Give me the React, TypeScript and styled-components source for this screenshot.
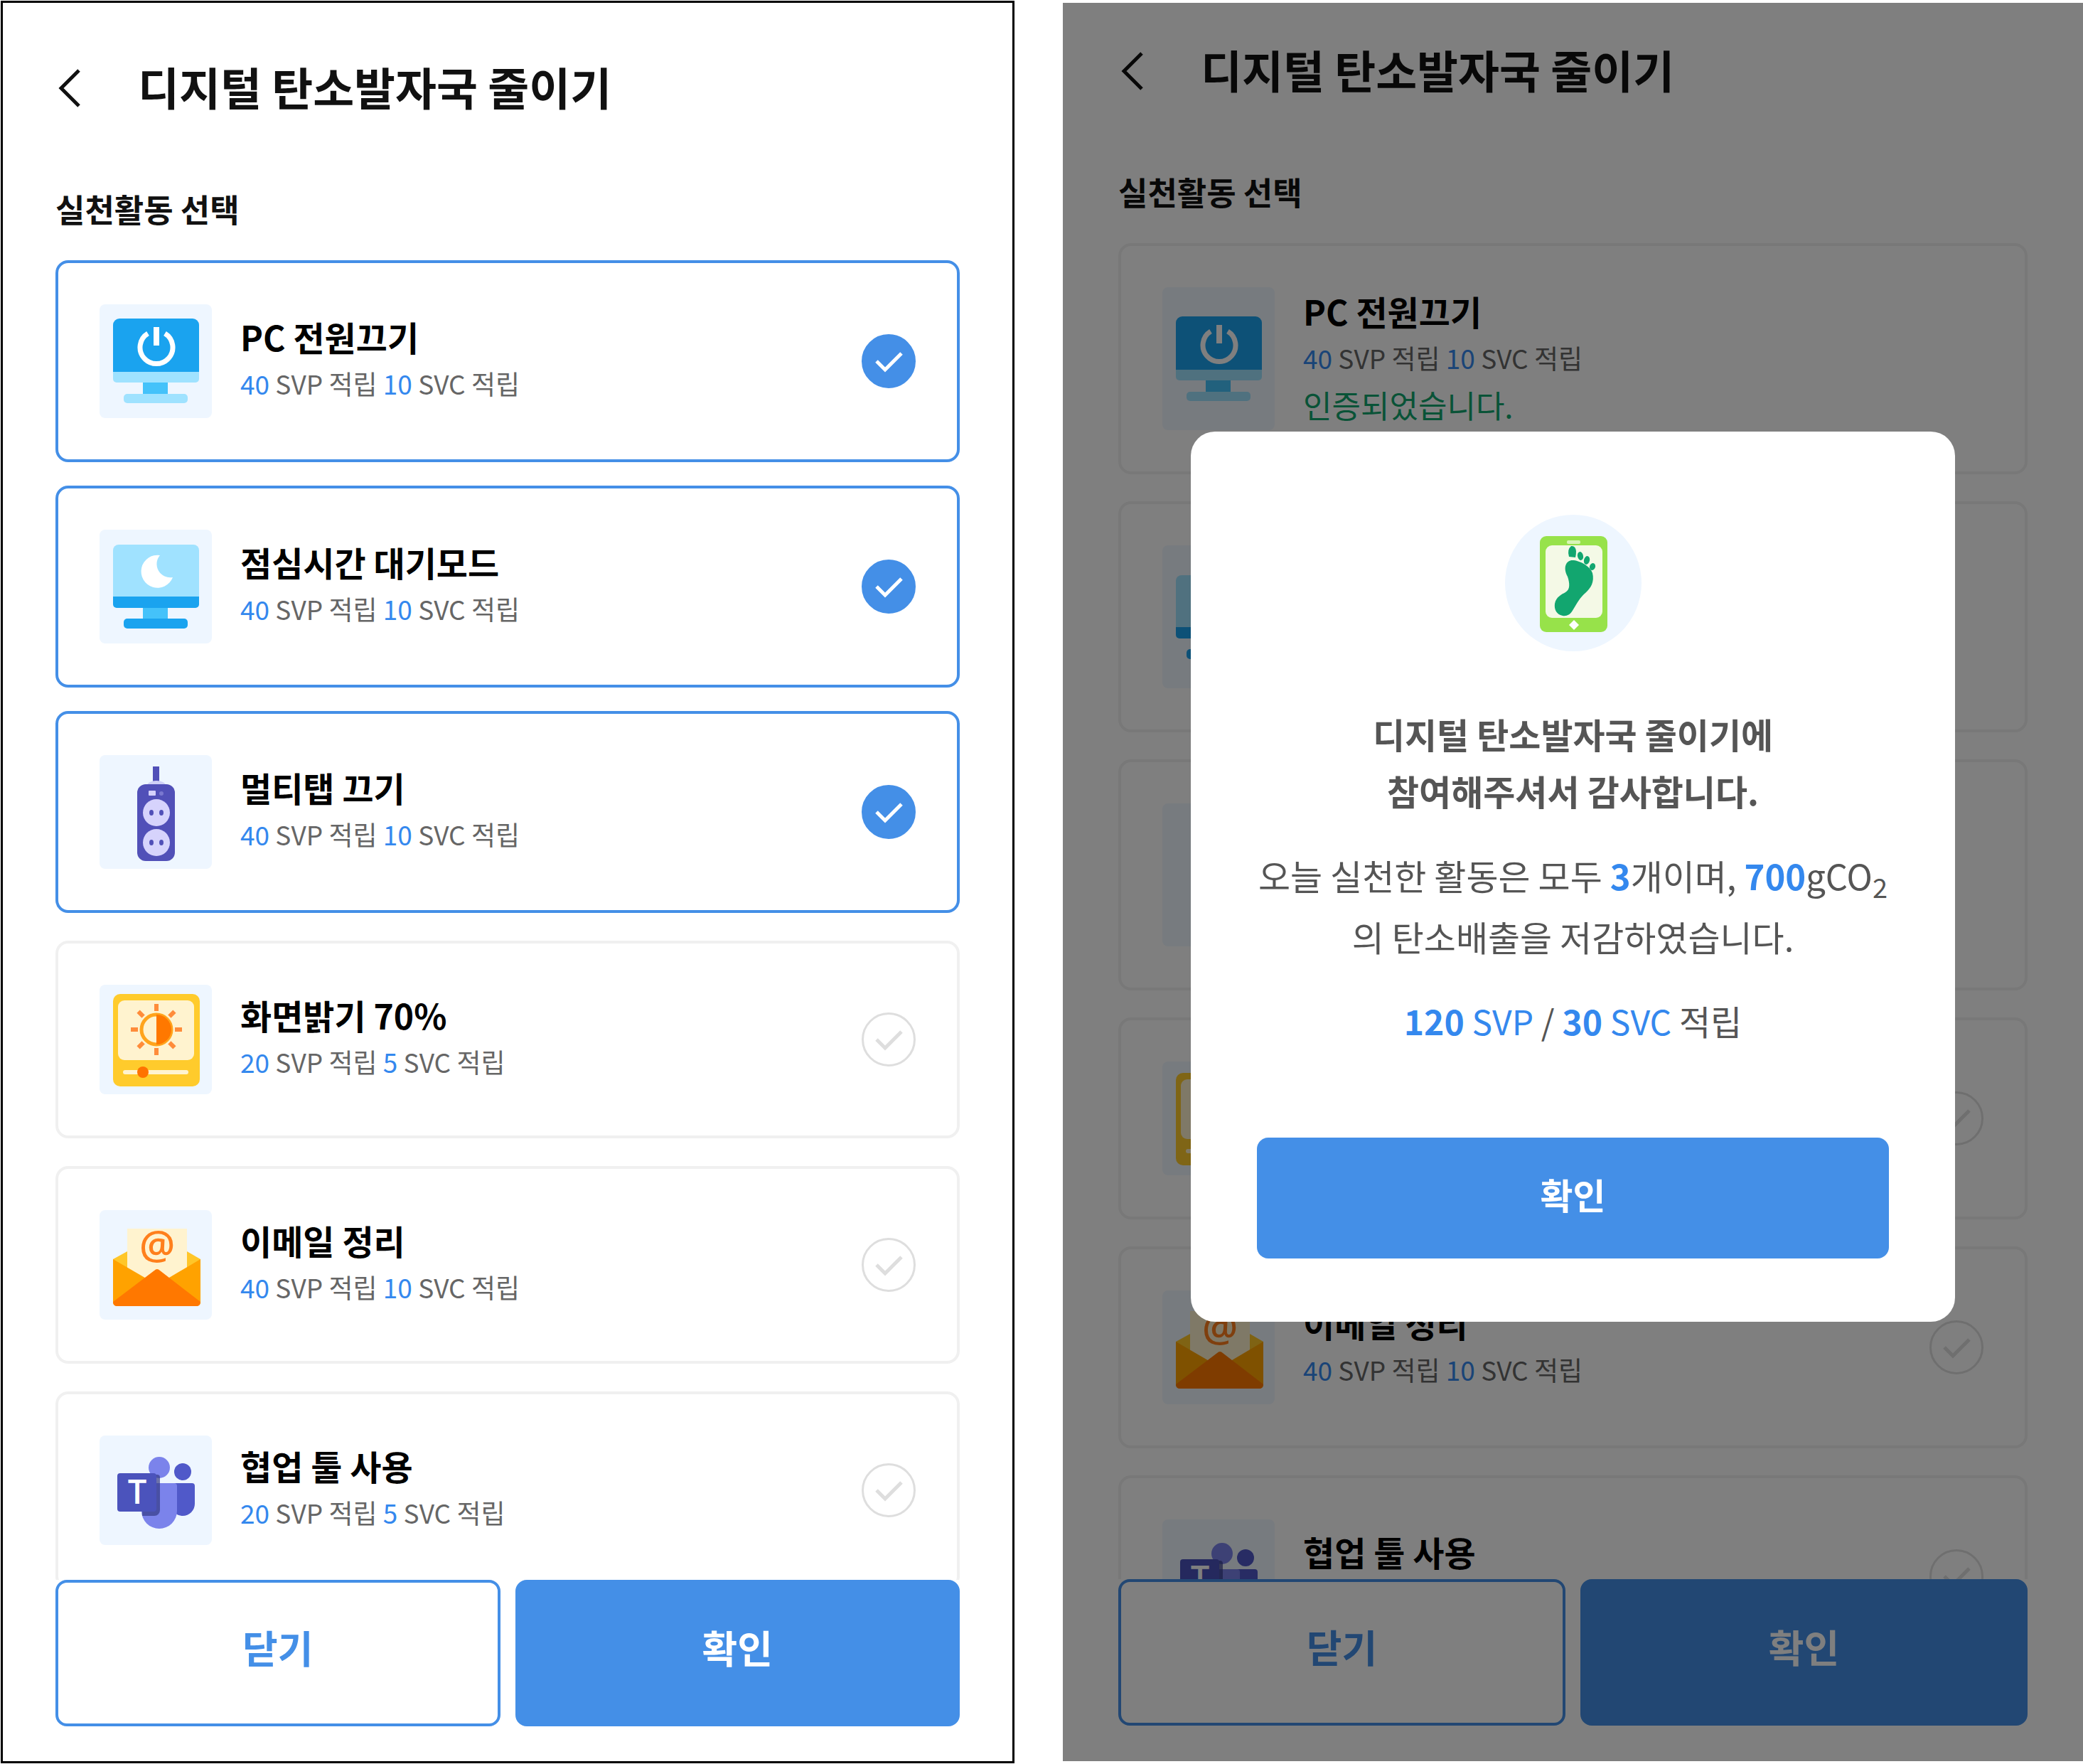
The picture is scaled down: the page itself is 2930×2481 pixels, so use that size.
import React, { useState } from "react";
import styled, { createGlobalStyle, css } from "styled-components";

const BLUE = "#448fe7";
const GREEN = "#12a66f";
const FONT = `"Noto Sans CJK KR", "Noto Sans", sans-serif`;

const GlobalStyle = createGlobalStyle`
  *, *::before, *::after { box-sizing: border-box; }
  body { margin: 0; background: #fff; font-family: ${FONT}; color: #111; }
  h1, h2, h3, p, ul { margin: 0; padding: 0; }
  button, input { font-family: inherit; margin: 0; }
`;

const Page = styled.main`
  display: grid;
  grid-template-columns: minmax(0, 1426fr) minmax(0, 1435fr);
  gap: 68px;
  height: 100vh;
  padding: 1px 0 1px 1px;
`;

const Screen = styled.section<{ $framed?: boolean }>`
  position: relative;
  display: flex;
  flex-direction: column;
  min-height: 0;
  overflow: hidden;
  background: #fff;
  ${({ $framed }) =>
    $framed
      ? css`
          border: 3px solid #000;
          padding: 72px 74px 49px;
        `
      : css`
          margin: 3px 0;
          padding: 48px 78px 50px;
        `}
`;

const Header = styled.header`
  display: flex;
  align-items: center;
  gap: 76px;
  flex: none;
`;

const BackButton = styled.button`
  display: flex;
  width: 40px;
  padding: 0;
  border: 0;
  background: none;
  color: #111;
  cursor: pointer;
`;

const Title = styled.h1`
  padding-bottom: 6px;
  font-size: 63px;
  line-height: 90px;
  font-weight: 700;
  white-space: nowrap;
`;

const SectionTitle = styled.h2`
  flex: none;
  margin: 88px 0 38px;
  font-size: 45px;
  line-height: 68px;
  font-weight: 700;
`;

const List = styled.ul<{ $gap: number }>`
  display: flex;
  flex-direction: column;
  gap: ${({ $gap }) => $gap}px;
  flex: 1;
  min-height: 0;
  overflow: hidden;
  list-style: none;
`;

const Card = styled.label<{ $selected?: boolean; $tall?: boolean; $inset?: boolean }>`
  display: flex;
  align-items: center;
  gap: 40px;
  height: ${({ $tall, $inset }) => ($tall ? 325 : $inset ? 278 : 284)}px;
  margin-top: ${({ $inset }) => ($inset ? 6 : 0)}px;
  padding: 58px;
  border: 4px solid ${({ $selected }) => ($selected ? BLUE : "#f0f0f0")};
  border-radius: 18px;
`;

const Tile = styled.span`
  display: flex;
  align-items: center;
  justify-content: center;
  align-self: stretch;
  flex: none;
  width: 158px;
  border-radius: 8px;
  background: #eef6ff;
`;

const CardText = styled.span`
  display: flex;
  flex-direction: column;
  flex: 1;
  min-width: 0;
  padding-bottom: 4px;
  line-height: 66px;
  white-space: nowrap;
`;

const CardTitle = styled.span`
  font-size: 48px;
  font-weight: 700;
  color: #000;
`;

const Reward = styled.span`
  font-size: 37px;
  color: #666;
`;

const Done = styled.span`
  font-size: 44px;
  color: ${GREEN};
`;

const Num = styled.span<{ $bold?: boolean }>`
  color: #3488ee;
  font-weight: ${({ $bold }) => ($bold ? 700 : 400)};
`;

const CheckBox = styled.span`
  display: grid;
  flex: none;
  width: 76px;
  height: 76px;
  > * {
    grid-area: 1 / 1;
  }
  svg {
    pointer-events: none;
  }
`;

const CheckInput = styled.input`
  appearance: none;
  width: 76px;
  height: 76px;
  border: 3px solid #dedede;
  border-radius: 50%;
  background: #fff;
  &:checked {
    border-color: ${BLUE};
    background: ${BLUE};
  }
`;

const Footer = styled.footer`
  display: flex;
  flex: none;
  gap: 21px;
  background: #fff;
`;

const ActionButton = styled.button<{ $primary?: boolean; $small?: boolean }>`
  flex: 1;
  height: ${({ $small }) => ($small ? 170 : 206)}px;
  padding: 0 0 ${({ $small }) => ($small ? 12 : 18)}px;
  border: ${({ $small }) => ($small ? 0 : `4px solid ${BLUE}`)};
  border-radius: 16px;
  background: ${({ $primary }) => ($primary ? BLUE : "#fff")};
  color: ${({ $primary }) => ($primary ? "#fff" : BLUE)};
  font-size: ${({ $small }) => ($small ? 50 : 54)}px;
  font-weight: 700;
  cursor: pointer;
`;

const Overlay = styled.div`
  position: absolute;
  inset: 0;
  display: flex;
  align-items: center;
  justify-content: center;
  padding: 0 180px 16px;
  background: rgba(0, 0, 0, 0.5);
`;

const Dialog = styled.div`
  display: flex;
  flex-direction: column;
  align-items: center;
  width: 100%;
  padding: 117px 93px 89px;
  border-radius: 34px;
  background: #fff;
  color: #555;
  font-size: 48px;
  text-align: center;
  white-space: nowrap;
`;

const Badge = styled.span`
  display: flex;
  width: 192px;
  height: 192px;
  border-radius: 50%;
  background: #eef6ff;
`;

const DialogTitle = styled.h3`
  margin-top: 76px;
  font-size: 49px;
  line-height: 80px;
  font-weight: 700;
`;

const DialogText = styled.p`
  margin-top: 36px;
  font-size: 49px;
  line-height: 86px;
  sub {
    font-size: 38px;
    line-height: 0;
  }
`;

const DialogReward = styled.p`
  margin: 32px 0 122px;
  line-height: 86px;
`;

const DialogActions = styled.div`
  display: flex;
  width: 100%;
`;

function IconBox({ children }: { children: React.ReactNode }) {
  return (
    <svg width="156" height="156" viewBox="0 0 156 156" aria-hidden="true">
      {children}
    </svg>
  );
}

function PowerIcon() {
  return (
    <IconBox>
      <path d="M18 95V27a9 9 0 0 1 9-9h103a9 9 0 0 1 9 9v68Z" fill="#1aa3ef" />
      <path d="M18 93h121v10a5 5 0 0 1-5 5H23a5 5 0 0 1-5-5Z" fill="#9fe2ff" />
      <path d="M60 108h35v16H60Z" fill="#44c2fa" />
      <rect x="33" y="124" width="90" height="13" rx="5" fill="#9fe2ff" />
      <path d="M67 39a23 23 0 1 0 24 0" fill="none" stroke="#fff" strokeWidth="7" />
      <path d="M79 30v26" stroke="#fff" strokeWidth="8" />
    </IconBox>
  );
}

function MoonIcon() {
  return (
    <IconBox>
      <path d="M18 94V27a8 8 0 0 1 8-8h105a8 8 0 0 1 8 8v67Z" fill="#a0e2ff" />
      <path d="M18 92h121v11a5 5 0 0 1-5 5H23a5 5 0 0 1-5-5Z" fill="#1aa3ef" />
      <path d="M60 108h35v16H60Z" fill="#44c2fa" />
      <rect x="33" y="123" width="90" height="14" rx="5" fill="#1aa3ef" />
      <path d="M84 34A23 23 0 1 0 102 65A19 19 0 0 1 84 34Z" fill="#fff" />
    </IconBox>
  );
}

function StripIcon() {
  return (
    <IconBox>
      <path d="M74 14h9v22h-9Z" fill="#5150b8" />
      <path d="M66 41a13 7 0 0 1 26 0Z" fill="#cfd0f7" />
      <rect x="52" y="39" width="53" height="108" rx="12" fill="#5150b8" />
      <rect x="68" y="48" width="10" height="7" rx="1" fill="#d4d1fb" />
      <circle cx="86" cy="52" r="3" fill="#7a78cf" />
      {[79, 121].map((cy) => (
        <g key={cy}>
          <circle cx="79" cy={cy} r="19" fill="#d6d3fc" />
          <ellipse cx="72" cy={cy} rx="3" ry="4" fill="#5150b8" />
          <ellipse cx="86" cy={cy} rx="3" ry="4" fill="#5150b8" />
        </g>
      ))}
    </IconBox>
  );
}

function BrightnessIcon() {
  return (
    <IconBox>
      <rect x="18" y="14" width="122" height="130" rx="10" fill="#ffcb2c" />
      <rect x="25" y="23" width="107" height="84" rx="9" fill="#fff3cf" />
      {[0, 45, 90, 135, 180, 225, 270, 315].map((a) => (
        <path
          key={a}
          d="M79 28v10"
          stroke="#ff8c3a"
          strokeWidth="6"
          transform={`rotate(${a} 79 64)`}
        />
      ))}
      <circle cx="79" cy="64" r="21" fill="none" stroke="#ffa41c" strokeWidth="5" />
      <path d="M79 43a21 21 0 0 1 0 42Z" fill="#ff7800" />
      <path d="M35 124h86" stroke="#fff3cf" strokeWidth="6" strokeLinecap="round" />
      <circle cx="60" cy="124" r="8" fill="#ff7200" />
    </IconBox>
  );
}

function MailIcon() {
  return (
    <IconBox>
      <path d="M18 70L38 59H122L141 70V96H18Z" fill="#ffc629" />
      <path d="M38 27h84v75H38Z" fill="#fff3cf" />
      <path d="M18 70L80 106L141 70V131a5 5 0 0 1-5 5H23a5 5 0 0 1-5-5Z" fill="#ffa200" />
      <path d="M18 130L76 86q4-4 8 0L141 130a5 6 0 0 1-5 6H23a5 6 0 0 1-5-6Z" fill="#ff7800" />
      <text
        x="80"
        y="70"
        textAnchor="middle"
        fontFamily="Open Sans, sans-serif"
        fontSize="56"
        fontWeight="600"
        fill="#ff7f1c"
      >
        @
      </text>
    </IconBox>
  );
}

function TeamsIcon() {
  return (
    <IconBox>
      <circle cx="116" cy="52" r="12" fill="#5059c9" />
      <path d="M98 68h31a4 4 0 0 1 4 4v25a17 17 0 0 1-34 0Z" fill="#5059c9" />
      <circle cx="83" cy="46" r="15" fill="#7b83eb" />
      <path d="M58 68h46a4 4 0 0 1 4 4v35a25 25 0 0 1-50 0Z" fill="#7b83eb" />
      <path d="M60 56h20a4 4 0 0 1 4 4v46a8 8 0 0 1-8 8H59Z" fill="#343a86" opacity="0.7" />
      <rect x="24" y="54" width="55" height="54" rx="4" fill="#4b53bc" />
      <text
        x="52"
        y="97"
        textAnchor="middle"
        fontFamily="Open Sans, sans-serif"
        fontSize="47"
        fontWeight="600"
        fill="#fff"
      >
        T
      </text>
    </IconBox>
  );
}

function FootprintIcon() {
  return (
    <svg width="192" height="192" viewBox="0 0 192 192" aria-hidden="true">
      <rect x="49" y="30" width="95" height="135" rx="9" fill="#97e24a" />
      <rect x="57" y="43" width="80" height="102" rx="9" fill="#f4f9e6" />
      <rect x="87" y="36" width="19" height="5" rx="2" fill="#d9f4b8" />
      <path d="M97 148l7 7-7 7-7-7Z" fill="#fff" />
      <g fill={GREEN}>
        <path d="M90 59q-3-10 3-15q6-1 7 7q0 6-1 9Z" />
        <ellipse cx="106" cy="58" rx="4" ry="6" transform="rotate(-12 106 58)" />
        <ellipse cx="115" cy="64" rx="4" ry="6" transform="rotate(14 115 64)" />
        <ellipse cx="123" cy="73" rx="4" ry="5" transform="rotate(20 123 73)" />
        <path d="M95 64C104 64 120 72 123 82C126 94 121 103 113 110C105 117 102 123 96 133C92 141 86 143 81 142C72 140 69 133 70 125C72 115 80 112 85 109C92 105 91 96 88 87C81 74 86 64 95 64Z" />
      </g>
    </svg>
  );
}

function Chevron() {
  return (
    <svg width="40" height="56" viewBox="0 0 40 56" aria-hidden="true">
      <path d="M33 3L8 28L33 53" fill="none" stroke="currentColor" strokeWidth="5" />
    </svg>
  );
}

type Activity = {
  title: string;
  svp: number;
  svc: number;
  Icon: () => React.JSX.Element;
};

const activities: Activity[] = [
  { title: "PC 전원끄기", svp: 40, svc: 10, Icon: PowerIcon },
  { title: "점심시간 대기모드", svp: 40, svc: 10, Icon: MoonIcon },
  { title: "멀티탭 끄기", svp: 40, svc: 10, Icon: StripIcon },
  { title: "화면밝기 70%", svp: 20, svc: 5, Icon: BrightnessIcon },
  { title: "이메일 정리", svp: 40, svc: 10, Icon: MailIcon },
  { title: "협업 툴 사용", svp: 20, svc: 5, Icon: TeamsIcon },
];

function ActivityCard({
  activity,
  done,
  selected,
  inset,
  onToggle,
}: {
  activity: Activity;
  done?: boolean;
  selected?: boolean;
  inset?: boolean;
  onToggle?: () => void;
}) {
  const { title, svp, svc, Icon } = activity;
  return (
    <li>
      <Card as={done ? "div" : "label"} $selected={selected} $tall={done} $inset={inset}>
        <Tile>
          <Icon />
        </Tile>
        <CardText>
          <CardTitle>{title}</CardTitle>
          <Reward>
            <Num>{svp}</Num> SVP 적립 <Num>{svc}</Num> SVC 적립
          </Reward>
          {done && <Done>인증되었습니다.</Done>}
        </CardText>
        {!done && (
          <CheckBox>
            <CheckInput type="checkbox" checked={!!selected} onChange={() => onToggle?.()} />
            <svg width="76" height="76" viewBox="0 0 76 76" aria-hidden="true">
              <path
                d="M21 38L33 50L56 27"
                fill="none"
                stroke={selected ? "#fff" : "#dedede"}
                strokeWidth="5"
              />
            </svg>
          </CheckBox>
        )}
      </Card>
    </li>
  );
}

function ScreenHeader() {
  return (
    <>
      <Header>
        <BackButton type="button" aria-label="뒤로">
          <Chevron />
        </BackButton>
        <Title>디지털 탄소발자국 줄이기</Title>
      </Header>
      <SectionTitle>실천활동 선택</SectionTitle>
    </>
  );
}

function ScreenFooter() {
  return (
    <Footer>
      <ActionButton type="button">닫기</ActionButton>
      <ActionButton type="button" $primary>
        확인
      </ActionButton>
    </Footer>
  );
}

export default function App() {
  const [selected, setSelected] = useState<number[]>([0, 1, 2]);
  const toggle = (i: number) =>
    setSelected((s) => (s.includes(i) ? s.filter((n) => n !== i) : [...s, i]));

  return (
    <>
      <GlobalStyle />
      <Page>
        <Screen $framed>
          <ScreenHeader />
          <List $gap={33}>
            {activities.map((a, i) => (
              <ActivityCard
                key={a.title}
                activity={a}
                selected={selected.includes(i)}
                inset={!selected.includes(i)}
                onToggle={() => toggle(i)}
              />
            ))}
          </List>
          <ScreenFooter />
        </Screen>

        <Screen>
          <ScreenHeader />
          <List $gap={38}>
            {activities.map((a, i) => (
              <ActivityCard key={a.title} activity={a} done={i < 3} />
            ))}
          </List>
          <ScreenFooter />
          <Overlay>
            <Dialog role="dialog" aria-modal="true" aria-labelledby="thanks">
              <Badge>
                <FootprintIcon />
              </Badge>
              <DialogTitle id="thanks">
                디지털 탄소발자국 줄이기에
                <br />
                참여해주셔서 감사합니다.
              </DialogTitle>
              <DialogText>
                오늘 실천한 활동은 모두 <Num $bold>3</Num>개이며, <Num $bold>700</Num>gCO
                <sub>2</sub>
                <br />의 탄소배출을 저감하였습니다.
              </DialogText>
              <DialogReward>
                <Num $bold>120</Num> <Num>SVP</Num> / <Num $bold>30</Num> <Num>SVC</Num> 적립
              </DialogReward>
              <DialogActions>
                <ActionButton type="button" $primary $small>
                  확인
                </ActionButton>
              </DialogActions>
            </Dialog>
          </Overlay>
        </Screen>
      </Page>
    </>
  );
}
